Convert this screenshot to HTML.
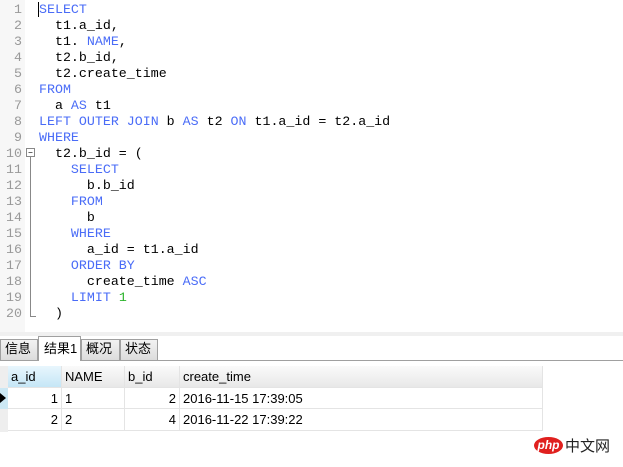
<!DOCTYPE html>
<html><head><meta charset="utf-8"><style>
*{margin:0;padding:0;box-sizing:border-box}
body{width:623px;height:467px;background:#fff;position:relative;overflow:hidden;font-family:"Liberation Sans","Noto Sans CJK SC",sans-serif}
#gut{position:absolute;left:0;top:0;width:25px;height:332px;background:#f7f7f7}
.ln{position:absolute;left:0;width:22px;text-align:right;font:13.3px "Liberation Mono",monospace;color:#999}
.cl{position:absolute;left:39px;font:13.3px "Liberation Mono",monospace;color:#000;white-space:pre;line-height:16px}
.k{color:#4a6cf7}.n{color:#2bb32b}
#sep{position:absolute;left:0;top:332px;width:623px;height:4px;background:#f0f0f0}
.tab{position:absolute;top:339px;height:21px;border:1px solid #a0a0a0;border-bottom:none;background:linear-gradient(#f2f2f2,#dcdcdc);font-size:13px;line-height:16px;padding:1px 0 0 4px}
#tl{position:absolute;left:0;top:360px;width:623px;height:1px;background:#a0a0a0}
.c{position:absolute;height:22px;font-size:13px;line-height:22px;border-right:1px solid #e4e4e4;border-bottom:1px solid #e4e4e4;padding:0 3px}
.h{background:linear-gradient(#fafafa,#e8e8e8)}
</style></head><body>
<div id="gut"></div>
<svg style="position:absolute;left:0;top:0" width="40" height="332"><rect x="26.5" y="148.5" width="8" height="8" fill="#fff" stroke="#888"/><line x1="28.5" y1="152.5" x2="32.5" y2="152.5" stroke="#666"/><line x1="30.5" y1="157" x2="30.5" y2="317" stroke="#888"/><line x1="30.5" y1="316.5" x2="36" y2="316.5" stroke="#888"/></svg>
<div class="ln" style="top:2px;line-height:16px">1<br>2<br>3<br>4<br>5<br>6<br>7<br>8<br>9<br>10<br>11<br>12<br>13<br>14<br>15<br>16<br>17<br>18<br>19<br>20</div>
<div class="cl" style="top:2px"><span class="k">SELECT</span>
  t1.a_id,
  t1. <span class="k">NAME</span>,
  t2.b_id,
  t2.create_time
<span class="k">FROM</span>
  a <span class="k">AS</span> t1
<span class="k">LEFT OUTER JOIN</span> b <span class="k">AS</span> t2 <span class="k">ON</span> t1.a_id = t2.a_id
<span class="k">WHERE</span>
  t2.b_id = (
    <span class="k">SELECT</span>
      b.b_id
    <span class="k">FROM</span>
      b
    <span class="k">WHERE</span>
      a_id = t1.a_id
    <span class="k">ORDER BY</span>
      create_time <span class="k">ASC</span>
    <span class="k">LIMIT</span> <span class="n">1</span>
  )</div>
<div style="position:absolute;left:38px;top:2px;width:1px;height:15px;background:#000"></div>
<div id="sep"></div>
<div class="tab" style="left:0;width:38px">信息</div>
<div class="tab" style="left:81px;width:39px">概况</div>
<div class="tab" style="left:120px;width:38px">状态</div>
<div id="tl"></div>
<div class="tab" style="left:38px;top:336px;height:25px;width:43px;background:#fff;padding:4px 0 0 5px">结果1</div>
<div class="c" style="left:0;top:366px;width:8px;border:none;background:#eee;height:66px"></div>
<div class="c h" style="left:8px;top:366px;width:54px;background:linear-gradient(#e8f6fd,#c5e6f6)">a_id</div>
<div class="c h" style="left:62px;top:366px;width:63px">NAME</div>
<div class="c h" style="left:125px;top:366px;width:55px">b_id</div>
<div class="c h" style="left:180px;top:366px;width:363px">create_time</div>
<div style="position:absolute;left:0;top:388px;width:8px;height:21px;background:#cce8f4"></div>
<div style="position:absolute;left:0;top:393px;width:0;height:0;border-left:6px solid #000;border-top:5px solid transparent;border-bottom:5px solid transparent"></div>
<div class="c" style="left:8px;top:388px;width:54px;height:21px;text-align:right;line-height:21px">1</div>
<div class="c" style="left:62px;top:388px;width:63px;height:21px;line-height:21px">1</div>
<div class="c" style="left:125px;top:388px;width:55px;height:21px;text-align:right;line-height:21px">2</div>
<div class="c" style="left:180px;top:388px;width:363px;height:21px;line-height:21px">2016-11-15 17:39:05</div>
<div class="c" style="left:8px;top:409px;width:54px;text-align:right">2</div>
<div class="c" style="left:62px;top:409px;width:63px">2</div>
<div class="c" style="left:125px;top:409px;width:55px;text-align:right">4</div>
<div class="c" style="left:180px;top:409px;width:363px">2016-11-22 17:39:22</div>
<div style="position:absolute;left:534px;top:437px;width:29px;height:17px;border-radius:50%;background:#e0201e;color:#fff;font:italic bold 12px 'Liberation Sans',sans-serif;text-align:center;line-height:16px">php</div>
<div style="position:absolute;left:565px;top:436px;font:15px 'Noto Sans CJK SC',sans-serif;color:#222;line-height:20px">中文网</div>
</body></html>
